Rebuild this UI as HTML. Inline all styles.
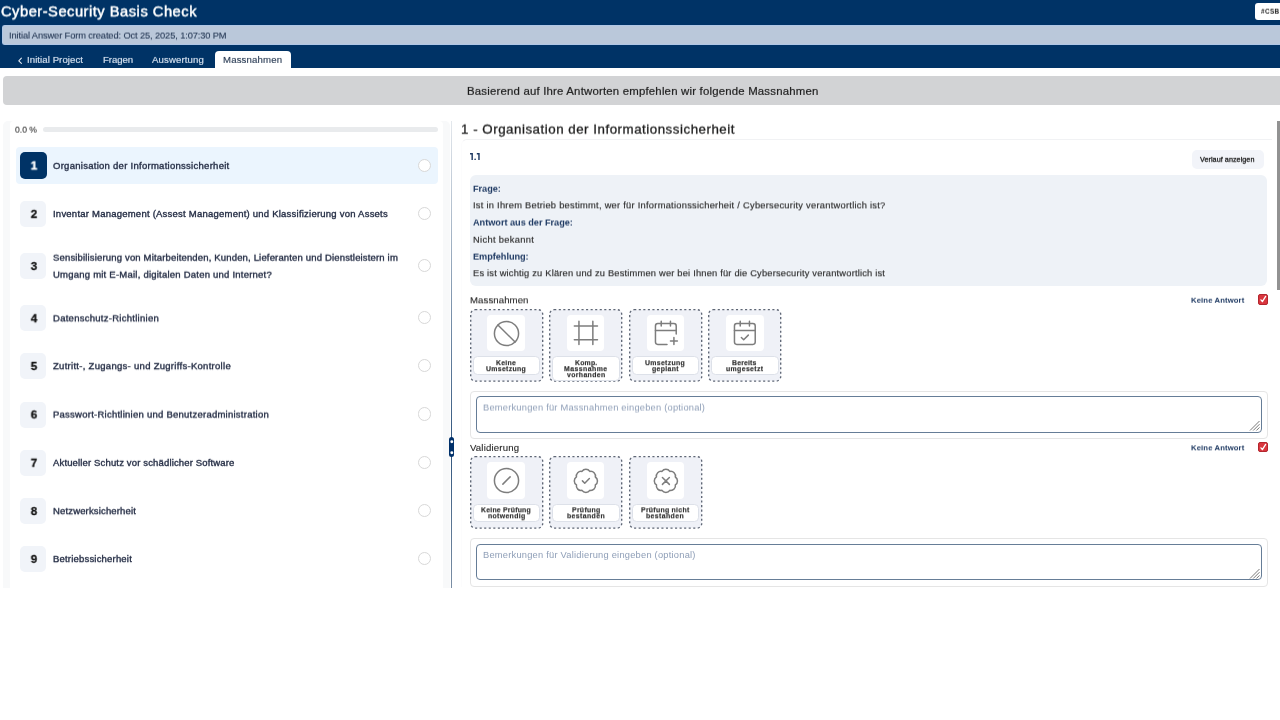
<!DOCTYPE html>
<html><head><meta charset="utf-8"><title>Cyber-Security Basis Check</title>
<style>
*{box-sizing:border-box;margin:0;padding:0}
html,body{width:1280px;height:720px;overflow:hidden;background:#fff;font-family:"Liberation Sans",sans-serif;color:#222}
.abs{position:absolute}
.t{position:absolute;white-space:nowrap;will-change:transform;transform-origin:0 50%}
#hdr{position:absolute;left:0;top:0;width:1280px;height:68.3px;background:#003366}
#csb{position:absolute;left:1255px;top:2.9px;width:30px;height:17.2px;background:#fff;border-radius:3px}
#info{position:absolute;left:2px;top:25.4px;width:1280px;height:19.7px;background:#bac8da;border:0.9px solid #b0c7e6;border-right:none;border-radius:3px 0 0 3px}
#tabA{position:absolute;left:215px;top:51px;width:76px;height:17.5px;background:#fff;border-radius:4px 4px 0 0}
#banner{position:absolute;left:3px;top:76.2px;width:1280px;height:29px;background:#d2d3d5;border-radius:4px 0 0 4px}
.ibox{position:absolute;width:37.4px;height:36.5px;background:#fff;border-radius:4px}
.lbox{position:absolute;width:67.6px;background:#fff;border:1px solid #dde1e9;border-radius:4.5px}
.ic{position:absolute;fill:none;stroke:#7d7d7d;stroke-width:1.2;stroke-linecap:round;stroke-linejoin:round}
</style></head><body>
<div id="hdr"><div id="csb"></div><div id="info"></div><div id="tabA"></div>
<svg class="abs" style="left:17px;top:56.5px" width="6" height="8" viewBox="0 0 6 8"><path d="M4.4 1.2L1.8 3.8L4.4 6.4" stroke="#e4ebf4" stroke-width="1.1" fill="none" stroke-linecap="round" stroke-linejoin="round"/></svg>
</div>
<div id="banner"></div>
<div class="abs" style="left:3.3px;top:121px;width:447px;height:466.5px;background:#f8f9fa;border-radius:5px 5px 0 0"></div>
<div class="abs" style="left:9.6px;top:121px;width:433.6px;height:466.5px;background:#fff;border-radius:4px 4px 0 0"></div>
<div class="abs" style="left:43px;top:127.2px;width:394.5px;height:5px;background:#e9ebed;border-radius:3px"></div>
<div class="abs" style="left:16px;top:147.2px;width:421.5px;height:36.8px;background:#ebf5fe;border-radius:4px"></div>
<div class="abs" style="left:20px;top:152.30px;width:27px;height:27px;background:#003366;border-radius:5px"></div>
<div class="abs" style="left:418.10px;top:158.70px;width:13.2px;height:13.2px;border:1.3px solid #d8d8d8;border-radius:50%;background:#fff"></div>
<div class="abs" style="left:20.2px;top:200.90px;width:26px;height:26px;background:#f1f4f9;border-radius:5px"></div>
<div class="abs" style="left:418.10px;top:206.80px;width:13.2px;height:13.2px;border:1.3px solid #d8d8d8;border-radius:50%;background:#fff"></div>
<div class="abs" style="left:20.2px;top:253.10px;width:26px;height:26px;background:#f1f4f9;border-radius:5px"></div>
<div class="abs" style="left:418.10px;top:259.00px;width:13.2px;height:13.2px;border:1.3px solid #d8d8d8;border-radius:50%;background:#fff"></div>
<div class="abs" style="left:20.2px;top:305.30px;width:26px;height:26px;background:#f1f4f9;border-radius:5px"></div>
<div class="abs" style="left:418.10px;top:311.20px;width:13.2px;height:13.2px;border:1.3px solid #d8d8d8;border-radius:50%;background:#fff"></div>
<div class="abs" style="left:20.2px;top:353.10px;width:26px;height:26px;background:#f1f4f9;border-radius:5px"></div>
<div class="abs" style="left:418.10px;top:359.00px;width:13.2px;height:13.2px;border:1.3px solid #d8d8d8;border-radius:50%;background:#fff"></div>
<div class="abs" style="left:20.2px;top:401.50px;width:26px;height:26px;background:#f1f4f9;border-radius:5px"></div>
<div class="abs" style="left:418.10px;top:407.40px;width:13.2px;height:13.2px;border:1.3px solid #d8d8d8;border-radius:50%;background:#fff"></div>
<div class="abs" style="left:20.2px;top:449.80px;width:26px;height:26px;background:#f1f4f9;border-radius:5px"></div>
<div class="abs" style="left:418.10px;top:455.70px;width:13.2px;height:13.2px;border:1.3px solid #d8d8d8;border-radius:50%;background:#fff"></div>
<div class="abs" style="left:20.2px;top:498.10px;width:26px;height:26px;background:#f1f4f9;border-radius:5px"></div>
<div class="abs" style="left:418.10px;top:504.00px;width:13.2px;height:13.2px;border:1.3px solid #d8d8d8;border-radius:50%;background:#fff"></div>
<div class="abs" style="left:20.2px;top:546.00px;width:26px;height:26px;background:#f1f4f9;border-radius:5px"></div>
<div class="abs" style="left:418.10px;top:551.90px;width:13.2px;height:13.2px;border:1.3px solid #d8d8d8;border-radius:50%;background:#fff"></div>
<div class="abs" style="left:451.1px;top:121px;width:1.4px;height:466.5px;background:linear-gradient(rgba(30,65,105,0.12) 0,rgba(20,62,108,0.88) 326px,rgba(35,68,105,0.6) 466px)"></div>
<div class="abs" style="left:449.2px;top:436.6px;width:5.2px;height:20.8px;background:#00306a;border-radius:2.5px"></div>
<svg class="abs" style="left:449px;top:436px" width="6" height="22" viewBox="0 0 6 22"><circle cx="2.8" cy="5.8" r="1.45" fill="#fff"/><circle cx="2.8" cy="16.7" r="1.45" fill="#fff"/></svg>
<svg class="abs" style="left:469.7px;top:152.5px" width="10" height="7.2" viewBox="0 0 10 7.2"><g fill="#1f3a63"><path d="M0 0.1H2.9V7.1H1.45V1.45H0Z"/><rect x="4.35" y="5.6" width="1.5" height="1.5" rx="0.5"/><path d="M6.8 0.1H9.7V7.1H8.25V1.45H6.8Z"/></g></svg>
<div class="abs" style="left:461px;top:139.2px;width:811px;height:448.3px;border-top:1.2px solid #f1f2f4;border-left:1px solid #fcfcfd;border-radius:6px 0 0 0"></div>
<div class="abs" style="left:1276.8px;top:121px;width:4px;height:168.7px;background:#929292"></div>
<div class="abs" style="left:1191.7px;top:150.0px;width:72.3px;height:18.8px;background:#f2f4f9;border-radius:5px"></div>
<div class="abs" style="left:469.7px;top:175.3px;width:797.8px;height:111.2px;background:#eef2f7;border-radius:6px"></div>
<svg class="abs" style="left:468.60px;top:308.00px" width="76" height="75.4" viewBox="0 0 76 75.4"><rect x="1.7" y="1.7" width="72" height="71.4" rx="4.5" fill="#eff1f7" stroke="#5e6675" stroke-width="1.35" stroke-dasharray="2.1 2.45" stroke-linecap="butt"/></svg><div class="ibox" style="left:487.30px;top:314.80px"></div><svg class="ic" style="left:491.60px;top:318.80px;stroke-width:1.241" width="29" height="29" viewBox="0 0 24 24"><circle cx="12" cy="12" r="10"/><path d="m4.9 4.9 14.2 14.2"/></svg><div class="lbox" style="left:472.60px;top:356.40px;height:18.2px"></div>
<svg class="abs" style="left:548.07px;top:308.00px" width="76" height="75.4" viewBox="0 0 76 75.4"><rect x="1.7" y="1.7" width="72" height="71.4" rx="4.5" fill="#eff1f7" stroke="#5e6675" stroke-width="1.35" stroke-dasharray="2.1 2.45" stroke-linecap="butt"/></svg><div class="ibox" style="left:566.97px;top:314.80px"></div><svg class="ic" style="left:571.87px;top:319.40px;stroke-width:1.295" width="27.8" height="27.8" viewBox="0 0 24 24"><path d="M22 6H2M22 18H2M6 2v20M18 2v20"/></svg><div class="lbox" style="left:552.07px;top:356.40px;height:24.3px"></div>
<svg class="abs" style="left:627.53px;top:308.00px" width="76" height="75.4" viewBox="0 0 76 75.4"><rect x="1.7" y="1.7" width="72" height="71.4" rx="4.5" fill="#eff1f7" stroke="#5e6675" stroke-width="1.35" stroke-dasharray="2.1 2.45" stroke-linecap="butt"/></svg><div class="ibox" style="left:646.63px;top:314.80px"></div><svg class="ic" style="left:651.58px;top:319.45px;stroke-width:1.300" width="27.7" height="27.7" viewBox="0 0 24 24"><path d="M8 2v4M16 2v4"/><path d="M21 13V6a2 2 0 0 0-2-2H5a2 2 0 0 0-2 2v14a2 2 0 0 0 2 2h8"/><path d="M3 10h18M16 19h6M19 16v6"/></svg><div class="lbox" style="left:631.53px;top:356.40px;height:18.2px"></div>
<svg class="abs" style="left:707.00px;top:308.00px" width="76" height="75.4" viewBox="0 0 76 75.4"><rect x="1.7" y="1.7" width="72" height="71.4" rx="4.5" fill="#eff1f7" stroke="#5e6675" stroke-width="1.35" stroke-dasharray="2.1 2.45" stroke-linecap="butt"/></svg><div class="ibox" style="left:726.30px;top:314.80px"></div><svg class="ic" style="left:731.25px;top:319.45px;stroke-width:1.300" width="27.7" height="27.7" viewBox="0 0 24 24"><path d="M8 2v4M16 2v4"/><rect width="18" height="18" x="3" y="4" rx="2"/><path d="M3 10h18"/><path d="m9 16 2 2 4-4"/></svg><div class="lbox" style="left:711.00px;top:356.40px;height:18.2px"></div>
<div class="abs" style="left:469.8px;top:390.6px;width:798px;height:48.5px;border:1.7px solid #e5e5e5;border-radius:4px;background:#fff"></div>
<div class="abs" style="left:475.5px;top:396.20px;width:786px;height:36.6px;border:1.7px solid #667d97;border-radius:4px;background:#fff"></div>
<svg class="abs" style="left:1249px;top:420.20px" width="11" height="11" viewBox="0 0 11 11"><path d="M1 10.5L10.5 1M4.2 10.5L10.5 4.2M7.4 10.5L10.5 7.4" stroke="#707070" stroke-width="0.95" fill="none"/></svg>
<div class="abs" style="left:1258.3px;top:294.3px;width:10.2px;height:10.5px;background:#d9363e;border-radius:2px;border:0.8px solid #b3262e"></div>
<svg class="abs" style="left:1258.3px;top:294.3px" width="10.2" height="10.5" viewBox="0 0 10 10"><path d="M2.9 5.6L4.3 7.4L7.5 2.2" stroke="#fff" stroke-width="1.25" fill="none" stroke-linecap="round" stroke-linejoin="round"/></svg>
<svg class="abs" style="left:468.60px;top:455.40px" width="76" height="75.4" viewBox="0 0 76 75.4"><rect x="1.7" y="1.7" width="72" height="71.4" rx="4.5" fill="#eff1f7" stroke="#5e6675" stroke-width="1.35" stroke-dasharray="2.1 2.45" stroke-linecap="butt"/></svg><div class="ibox" style="left:487.30px;top:462.20px"></div><svg class="ic" style="left:491.60px;top:466.20px;stroke-width:1.241" width="29" height="29" viewBox="0 0 24 24"><circle cx="12" cy="12" r="10"/><path d="M9 15l6-6"/></svg><div class="lbox" style="left:472.60px;top:503.80px;height:18.2px"></div>
<svg class="abs" style="left:548.07px;top:455.40px" width="76" height="75.4" viewBox="0 0 76 75.4"><rect x="1.7" y="1.7" width="72" height="71.4" rx="4.5" fill="#eff1f7" stroke="#5e6675" stroke-width="1.35" stroke-dasharray="2.1 2.45" stroke-linecap="butt"/></svg><div class="ibox" style="left:566.97px;top:462.20px"></div><svg class="ic" style="left:571.87px;top:466.80px;stroke-width:1.295" width="27.8" height="27.8" viewBox="0 0 24 24"><path d="M3.85 8.62a4 4 0 0 1 4.78-4.77 4 4 0 0 1 6.74 0 4 4 0 0 1 4.78 4.78 4 4 0 0 1 0 6.74 4 4 0 0 1-4.77 4.78 4 4 0 0 1-6.75 0 4 4 0 0 1-4.78-4.77 4 4 0 0 1 0-6.76Z"/><path d="m9 12 2 2 4-4"/></svg><div class="lbox" style="left:552.07px;top:503.80px;height:18.2px"></div>
<svg class="abs" style="left:627.53px;top:455.40px" width="76" height="75.4" viewBox="0 0 76 75.4"><rect x="1.7" y="1.7" width="72" height="71.4" rx="4.5" fill="#eff1f7" stroke="#5e6675" stroke-width="1.35" stroke-dasharray="2.1 2.45" stroke-linecap="butt"/></svg><div class="ibox" style="left:646.63px;top:462.20px"></div><svg class="ic" style="left:651.53px;top:466.80px;stroke-width:1.295" width="27.8" height="27.8" viewBox="0 0 24 24"><path d="M3.85 8.62a4 4 0 0 1 4.78-4.77 4 4 0 0 1 6.74 0 4 4 0 0 1 4.78 4.78 4 4 0 0 1 0 6.74 4 4 0 0 1-4.77 4.78 4 4 0 0 1-6.75 0 4 4 0 0 1-4.78-4.77 4 4 0 0 1 0-6.76Z"/><path d="M15 9l-6 6M9 9l6 6"/></svg><div class="lbox" style="left:631.53px;top:503.80px;height:18.2px"></div>
<div class="abs" style="left:469.8px;top:538.0px;width:798px;height:48.5px;border:1.7px solid #e5e5e5;border-radius:4px;background:#fff"></div>
<div class="abs" style="left:475.5px;top:543.60px;width:786px;height:36.6px;border:1.7px solid #667d97;border-radius:4px;background:#fff"></div>
<svg class="abs" style="left:1249px;top:567.60px" width="11" height="11" viewBox="0 0 11 11"><path d="M1 10.5L10.5 1M4.2 10.5L10.5 4.2M7.4 10.5L10.5 7.4" stroke="#707070" stroke-width="0.95" fill="none"/></svg>
<div class="abs" style="left:1258.3px;top:441.9px;width:10.2px;height:10.5px;background:#d9363e;border-radius:2px;border:0.8px solid #b3262e"></div>
<svg class="abs" style="left:1258.3px;top:441.9px" width="10.2" height="10.5" viewBox="0 0 10 10"><path d="M2.9 5.6L4.3 7.4L7.5 2.2" stroke="#fff" stroke-width="1.25" fill="none" stroke-linecap="round" stroke-linejoin="round"/></svg>
<div class="t" id="t0" style="left:1.00px;top:2px;font-size:14.7px;line-height:19.11px;color:#fff;-webkit-text-stroke:0.45px #fff;transform:translate3d(0,0.42px,0) rotate(0.01deg);letter-spacing:0.506px;">Cyber-Security Basis Check</div>
<div class="t" id="t1" style="left:1261.00px;top:7px;font-size:6.4px;line-height:8.32px;color:#222;font-weight:bold;transform:translate3d(0,0.69px,0) rotate(0.01deg);letter-spacing:0.359px;">#CSB</div>
<div class="t" id="t2" style="left:8.50px;top:29px;font-size:9.3px;line-height:12.09px;color:#1f3350;-webkit-text-stroke:0.1px #1f3350;transform:translate3d(0,0.55px,0) rotate(0.01deg);letter-spacing:-0.118px;">Initial Answer Form created: Oct 25, 2025, 1:07:30 PM</div>
<div class="t" id="t3" style="left:27.00px;top:53px;font-size:9.6px;line-height:12.48px;color:#d6e1ef;-webkit-text-stroke:0.15px #d6e1ef;transform:translate3d(0,0.93px,0) rotate(0.01deg);letter-spacing:0.072px;">Initial Project</div>
<div class="t" id="t4" style="left:102.50px;top:53px;font-size:9.6px;line-height:12.48px;color:#d6e1ef;-webkit-text-stroke:0.15px #d6e1ef;transform:translate3d(0,0.93px,0) rotate(0.01deg);letter-spacing:-0.068px;">Fragen</div>
<div class="t" id="t5" style="left:152.00px;top:53px;font-size:9.6px;line-height:12.48px;color:#d6e1ef;-webkit-text-stroke:0.15px #d6e1ef;transform:translate3d(0,0.93px,0) rotate(0.01deg);letter-spacing:0.133px;">Auswertung</div>
<div class="t" id="t6" style="left:223.30px;top:53px;font-size:9.6px;line-height:12.48px;color:#2a3c55;-webkit-text-stroke:0.15px #2a3c55;transform:translate3d(0,0.93px,0) rotate(0.01deg);letter-spacing:0.160px;">Massnahmen</div>
<div class="t" id="t7" style="left:467.00px;top:83px;font-size:11.4px;line-height:14.82px;color:#1c1c1c;-webkit-text-stroke:0.2px #1c1c1c;transform:translate3d(0,0.90px,0) rotate(0.01deg);letter-spacing:0.195px;">Basierend auf Ihre Antworten empfehlen wir folgende Massnahmen</div>
<div class="t" id="t8" style="left:15.00px;top:124px;font-size:8.6px;line-height:11.18px;color:#333;-webkit-text-stroke:0.1px #333;transform:translate3d(0,0.67px,0) rotate(0.01deg);letter-spacing:0.003px;">0.0 %</div>
<div class="t" id="t9" style="left:52.50px;top:159px;font-size:9.5px;line-height:12.35px;color:#1f2840;-webkit-text-stroke:0.35px #1f2840;transform:translate3d(0,0.90px,0) rotate(0.01deg);letter-spacing:0.274px;">Organisation der Informationssicherheit</div>
<div class="t" id="t10" style="left:52.50px;top:208px;font-size:9.5px;line-height:12.35px;color:#1f2840;-webkit-text-stroke:0.35px #1f2840;transform:translate3d(0,0.00px,0) rotate(0.01deg);letter-spacing:0.229px;">Inventar Management (Assest Management) und Klassifizierung von Assets</div>
<div class="t" id="t11" style="left:52.50px;top:251px;font-size:9.5px;line-height:12.35px;color:#1f2840;-webkit-text-stroke:0.35px #1f2840;transform:translate3d(0,0.70px,0) rotate(0.01deg);letter-spacing:0.164px;">Sensibilisierung von Mitarbeitenden, Kunden, Lieferanten und Dienstleistern im</div>
<div class="t" id="t12" style="left:52.50px;top:268px;font-size:9.5px;line-height:12.35px;color:#1f2840;-webkit-text-stroke:0.35px #1f2840;transform:translate3d(0,0.70px,0) rotate(0.01deg);letter-spacing:0.228px;">Umgang mit E-Mail, digitalen Daten und Internet?</div>
<div class="t" id="t13" style="left:52.50px;top:312px;font-size:9.5px;line-height:12.35px;color:#1f2840;-webkit-text-stroke:0.35px #1f2840;transform:translate3d(0,0.40px,0) rotate(0.01deg);letter-spacing:0.270px;">Datenschutz-Richtlinien</div>
<div class="t" id="t14" style="left:52.50px;top:360px;font-size:9.5px;line-height:12.35px;color:#1f2840;-webkit-text-stroke:0.35px #1f2840;transform:translate3d(0,0.20px,0) rotate(0.01deg);letter-spacing:0.289px;">Zutritt-, Zugangs- und Zugriffs-Kontrolle</div>
<div class="t" id="t15" style="left:52.50px;top:408px;font-size:9.5px;line-height:12.35px;color:#1f2840;-webkit-text-stroke:0.35px #1f2840;transform:translate3d(0,0.60px,0) rotate(0.01deg);letter-spacing:0.248px;">Passwort-Richtlinien und Benutzeradministration</div>
<div class="t" id="t16" style="left:52.50px;top:456px;font-size:9.5px;line-height:12.35px;color:#1f2840;-webkit-text-stroke:0.35px #1f2840;transform:translate3d(0,0.90px,0) rotate(0.01deg);letter-spacing:0.151px;">Aktueller Schutz vor schädlicher Software</div>
<div class="t" id="t17" style="left:52.50px;top:505px;font-size:9.5px;line-height:12.35px;color:#1f2840;-webkit-text-stroke:0.35px #1f2840;transform:translate3d(0,0.20px,0) rotate(0.01deg);letter-spacing:0.153px;">Netzwerksicherheit</div>
<div class="t" id="t18" style="left:52.50px;top:553px;font-size:9.5px;line-height:12.35px;color:#1f2840;-webkit-text-stroke:0.35px #1f2840;transform:translate3d(0,0.10px,0) rotate(0.01deg);letter-spacing:0.193px;">Betriebssicherheit</div>
<div class="t" id="t19" style="left:33.60px;top:157px;font-size:11.6px;line-height:15.08px;color:#fff;font-weight:bold;-webkit-text-stroke:0.3px #fff;transform:translate3d(-50%,0.46px,0) rotate(0.01deg);">1</div>
<div class="t" id="t20" style="left:33.60px;top:205px;font-size:11.6px;line-height:15.08px;color:#111;font-weight:bold;-webkit-text-stroke:0.3px #111;transform:translate3d(-50%,0.86px,0) rotate(0.01deg);">2</div>
<div class="t" id="t21" style="left:33.60px;top:258px;font-size:11.6px;line-height:15.08px;color:#111;font-weight:bold;-webkit-text-stroke:0.3px #111;transform:translate3d(-50%,0.06px,0) rotate(0.01deg);">3</div>
<div class="t" id="t22" style="left:33.60px;top:310px;font-size:11.6px;line-height:15.08px;color:#111;font-weight:bold;-webkit-text-stroke:0.3px #111;transform:translate3d(-50%,0.26px,0) rotate(0.01deg);">4</div>
<div class="t" id="t23" style="left:33.60px;top:358px;font-size:11.6px;line-height:15.08px;color:#111;font-weight:bold;-webkit-text-stroke:0.3px #111;transform:translate3d(-50%,0.06px,0) rotate(0.01deg);">5</div>
<div class="t" id="t24" style="left:33.60px;top:406px;font-size:11.6px;line-height:15.08px;color:#111;font-weight:bold;-webkit-text-stroke:0.3px #111;transform:translate3d(-50%,0.46px,0) rotate(0.01deg);">6</div>
<div class="t" id="t25" style="left:33.60px;top:454px;font-size:11.6px;line-height:15.08px;color:#111;font-weight:bold;-webkit-text-stroke:0.3px #111;transform:translate3d(-50%,0.76px,0) rotate(0.01deg);">7</div>
<div class="t" id="t26" style="left:33.60px;top:503px;font-size:11.6px;line-height:15.08px;color:#111;font-weight:bold;-webkit-text-stroke:0.3px #111;transform:translate3d(-50%,0.06px,0) rotate(0.01deg);">8</div>
<div class="t" id="t27" style="left:33.60px;top:550px;font-size:11.6px;line-height:15.08px;color:#111;font-weight:bold;-webkit-text-stroke:0.3px #111;transform:translate3d(-50%,0.96px,0) rotate(0.01deg);">9</div>
<div class="t" id="t28" style="left:461.00px;top:120px;font-size:13.3px;line-height:17.29px;color:#1c1c1c;-webkit-text-stroke:0.3px #1c1c1c;transform:translate3d(0,0.60px,0) rotate(0.01deg);letter-spacing:0.528px;">1 - Organisation der Informationssicherheit</div>
<div class="t" id="t29" style="left:1200.30px;top:154px;font-size:7.2px;line-height:9.36px;color:#111;-webkit-text-stroke:0.25px #111;transform:translate3d(0,0.80px,0) rotate(0.01deg);letter-spacing:0.058px;">Verlauf anzeigen</div>
<div class="t" id="t30" style="left:473.20px;top:183px;font-size:9.2px;line-height:11.96px;color:#1f3a63;font-weight:bold;transform:translate3d(0,0.72px,0) rotate(0.01deg);letter-spacing:-0.033px;">Frage:</div>
<div class="t" id="t31" style="left:473.10px;top:199px;font-size:9.3px;line-height:12.09px;color:#2a2a2a;-webkit-text-stroke:0.15px #2a2a2a;transform:translate3d(0,0.35px,0) rotate(0.01deg);letter-spacing:0.263px;">Ist in Ihrem Betrieb bestimmt, wer für Informationssicherheit / Cybersecurity verantwortlich ist?</div>
<div class="t" id="t32" style="left:473.20px;top:217px;font-size:9.2px;line-height:11.96px;color:#1f3a63;font-weight:bold;transform:translate3d(0,0.52px,0) rotate(0.01deg);letter-spacing:-0.031px;">Antwort aus der Frage:</div>
<div class="t" id="t33" style="left:473.10px;top:233px;font-size:9.3px;line-height:12.09px;color:#2a2a2a;-webkit-text-stroke:0.15px #2a2a2a;transform:translate3d(0,0.75px,0) rotate(0.01deg);letter-spacing:0.334px;">Nicht bekannt</div>
<div class="t" id="t34" style="left:473.20px;top:251px;font-size:9.2px;line-height:11.96px;color:#1f3a63;font-weight:bold;transform:translate3d(0,0.62px,0) rotate(0.01deg);letter-spacing:-0.049px;">Empfehlung:</div>
<div class="t" id="t35" style="left:473.10px;top:267px;font-size:9.3px;line-height:12.09px;color:#2a2a2a;-webkit-text-stroke:0.15px #2a2a2a;transform:translate3d(0,0.25px,0) rotate(0.01deg);letter-spacing:0.197px;">Es ist wichtig zu Klären und zu Bestimmen wer bei Ihnen für die Cybersecurity verantwortlich ist</div>
<div class="t" id="t36" style="left:469.80px;top:294px;font-size:9.6px;line-height:12.48px;color:#222;-webkit-text-stroke:0.1px #222;transform:translate3d(0,0.33px,0) rotate(0.01deg);letter-spacing:0.090px;">Massnahmen</div>
<div class="t" id="t37" style="left:469.80px;top:441px;font-size:9.6px;line-height:12.48px;color:#222;-webkit-text-stroke:0.1px #222;transform:translate3d(0,0.93px,0) rotate(0.01deg);letter-spacing:0.173px;">Validierung</div>
<div class="t" id="t38" style="left:1191.00px;top:295px;font-size:7.7px;line-height:10.01px;color:#1f3a63;font-weight:bold;transform:translate3d(0,0.73px,0) rotate(0.01deg);letter-spacing:0.121px;">Keine Antwort</div>
<div class="t" id="t39" style="left:1191.00px;top:443px;font-size:7.7px;line-height:10.01px;color:#1f3a63;font-weight:bold;transform:translate3d(0,0.33px,0) rotate(0.01deg);letter-spacing:0.121px;">Keine Antwort</div>
<div class="t" id="t40" style="left:483.00px;top:401px;font-size:9.3px;line-height:12.09px;color:#8d9db6;transform:translate3d(0,0.55px,0) rotate(0.01deg);letter-spacing:0.224px;">Bemerkungen für Massnahmen eingeben (optional)</div>
<div class="t" id="t41" style="left:483.00px;top:548px;font-size:9.3px;line-height:12.09px;color:#8d9db6;transform:translate3d(0,0.95px,0) rotate(0.01deg);letter-spacing:0.229px;">Bemerkungen für Validierung eingeben (optional)</div>
<div class="t" id="t42" style="left:496.30px;top:359px;font-size:6.9px;line-height:8.97px;color:#2b2b2b;font-weight:bold;-webkit-text-stroke:0.15px #2b2b2b;transform:translate3d(0,0.22px,0) rotate(0.01deg);letter-spacing:0.247px;">Keine</div>
<div class="t" id="t43" style="left:486.30px;top:365px;font-size:6.9px;line-height:8.97px;color:#2b2b2b;font-weight:bold;-webkit-text-stroke:0.15px #2b2b2b;transform:translate3d(0,0.22px,0) rotate(0.01deg);letter-spacing:0.318px;">Umsetzung</div>
<div class="t" id="t44" style="left:574.52px;top:359px;font-size:6.9px;line-height:8.97px;color:#2b2b2b;font-weight:bold;-webkit-text-stroke:0.15px #2b2b2b;transform:translate3d(0,0.22px,0) rotate(0.01deg);letter-spacing:0.212px;">Komp.</div>
<div class="t" id="t45" style="left:564.02px;top:365px;font-size:6.9px;line-height:8.97px;color:#2b2b2b;font-weight:bold;-webkit-text-stroke:0.15px #2b2b2b;transform:translate3d(0,0.22px,0) rotate(0.01deg);letter-spacing:0.449px;">Massnahme</div>
<div class="t" id="t46" style="left:566.52px;top:371px;font-size:6.9px;line-height:8.97px;color:#2b2b2b;font-weight:bold;-webkit-text-stroke:0.15px #2b2b2b;transform:translate3d(0,0.22px,0) rotate(0.01deg);letter-spacing:0.363px;">vorhanden</div>
<div class="t" id="t47" style="left:645.23px;top:359px;font-size:6.9px;line-height:8.97px;color:#2b2b2b;font-weight:bold;-webkit-text-stroke:0.15px #2b2b2b;transform:translate3d(0,0.22px,0) rotate(0.01deg);letter-spacing:0.318px;">Umsetzung</div>
<div class="t" id="t48" style="left:651.73px;top:365px;font-size:6.9px;line-height:8.97px;color:#2b2b2b;font-weight:bold;-webkit-text-stroke:0.15px #2b2b2b;transform:translate3d(0,0.22px,0) rotate(0.01deg);letter-spacing:0.355px;">geplant</div>
<div class="t" id="t49" style="left:732.45px;top:359px;font-size:6.9px;line-height:8.97px;color:#2b2b2b;font-weight:bold;-webkit-text-stroke:0.15px #2b2b2b;transform:translate3d(0,0.22px,0) rotate(0.01deg);letter-spacing:0.160px;">Bereits</div>
<div class="t" id="t50" style="left:725.95px;top:365px;font-size:6.9px;line-height:8.97px;color:#2b2b2b;font-weight:bold;-webkit-text-stroke:0.15px #2b2b2b;transform:translate3d(0,0.22px,0) rotate(0.01deg);letter-spacing:0.380px;">umgesetzt</div>
<div class="t" id="t51" style="left:481.30px;top:506px;font-size:6.9px;line-height:8.97px;color:#2b2b2b;font-weight:bold;-webkit-text-stroke:0.15px #2b2b2b;transform:translate3d(0,0.32px,0) rotate(0.01deg);letter-spacing:0.223px;">Keine Prüfung</div>
<div class="t" id="t52" style="left:487.55px;top:512px;font-size:6.9px;line-height:8.97px;color:#2b2b2b;font-weight:bold;-webkit-text-stroke:0.15px #2b2b2b;transform:translate3d(0,0.32px,0) rotate(0.01deg);letter-spacing:0.338px;">notwendig</div>
<div class="t" id="t53" style="left:571.52px;top:506px;font-size:6.9px;line-height:8.97px;color:#2b2b2b;font-weight:bold;-webkit-text-stroke:0.15px #2b2b2b;transform:translate3d(0,0.32px,0) rotate(0.01deg);letter-spacing:0.297px;">Prüfung</div>
<div class="t" id="t54" style="left:566.77px;top:512px;font-size:6.9px;line-height:8.97px;color:#2b2b2b;font-weight:bold;-webkit-text-stroke:0.15px #2b2b2b;transform:translate3d(0,0.32px,0) rotate(0.01deg);letter-spacing:0.392px;">bestanden</div>
<div class="t" id="t55" style="left:640.98px;top:506px;font-size:6.9px;line-height:8.97px;color:#2b2b2b;font-weight:bold;-webkit-text-stroke:0.15px #2b2b2b;transform:translate3d(0,0.32px,0) rotate(0.01deg);letter-spacing:0.285px;">Prüfung nicht</div>
<div class="t" id="t56" style="left:646.23px;top:512px;font-size:6.9px;line-height:8.97px;color:#2b2b2b;font-weight:bold;-webkit-text-stroke:0.15px #2b2b2b;transform:translate3d(0,0.32px,0) rotate(0.01deg);letter-spacing:0.392px;">bestanden</div>
</body></html>
